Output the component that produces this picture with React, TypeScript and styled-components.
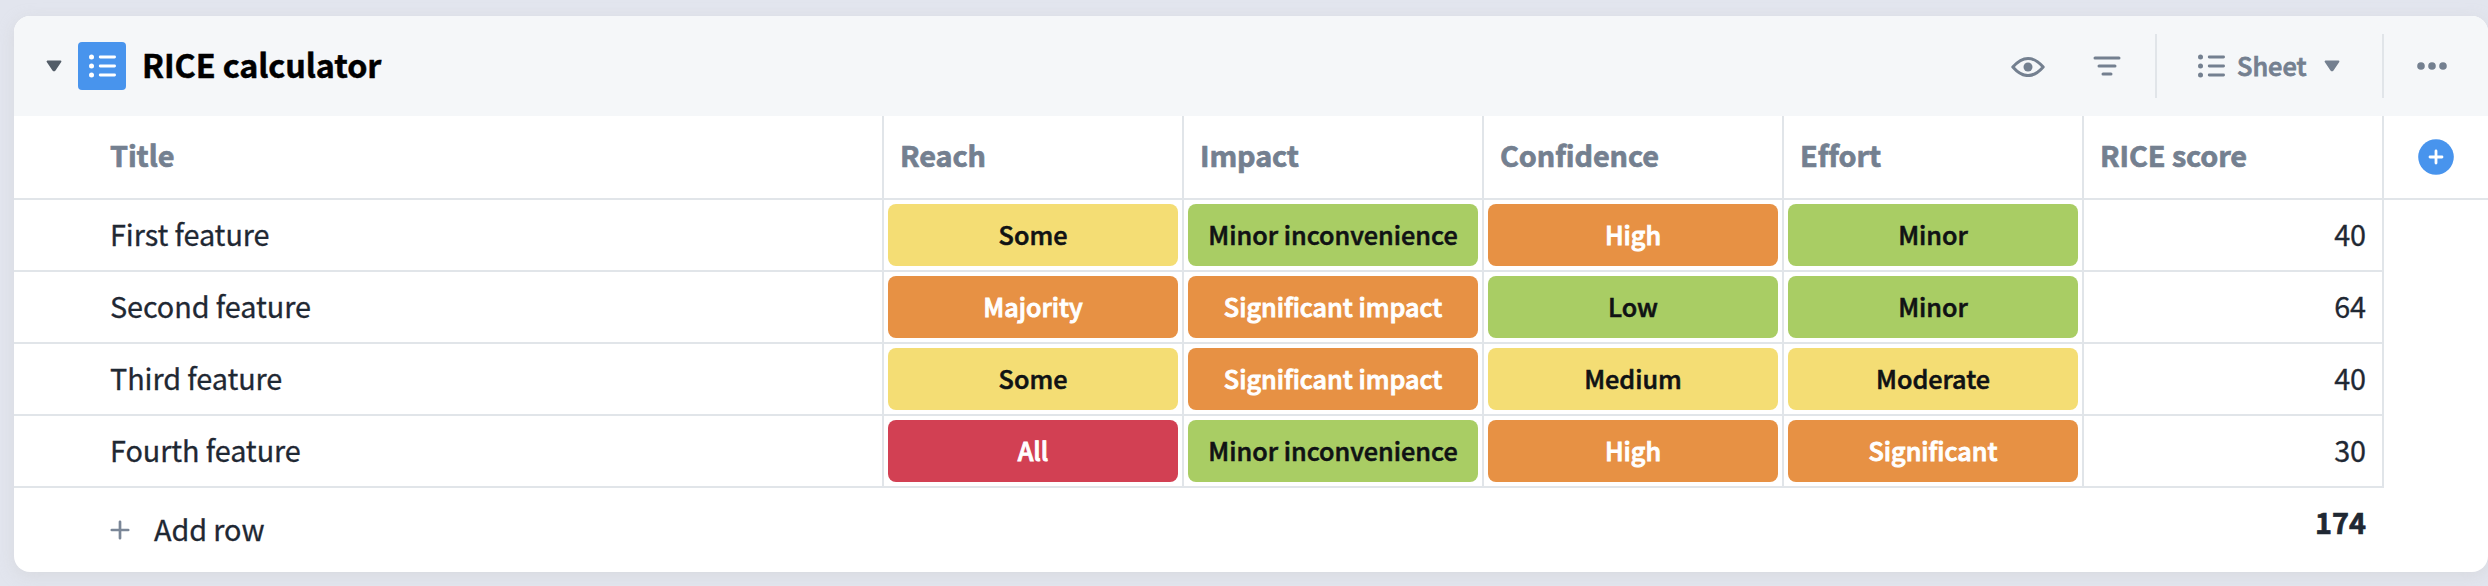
import React from 'react';
import styled, { createGlobalStyle } from 'styled-components';

const line = '#e1e5e9';
const slate = '#748090';
const blue = '#4894ed';

const tones = {
  yellow: { bg: '#f4dd74', fg: '#101214' },
  green: { bg: '#a9cd64', fg: '#101214' },
  orange: { bg: '#e79144', fg: '#ffffff' },
  red: { bg: '#d24053', fg: '#ffffff' },
};
type Tone = keyof typeof tones;

const GlobalStyle = createGlobalStyle`
  * { box-sizing: border-box; }
  body {
    margin: 0;
    background: #e2e5ee;
    font-family: "Noto Sans CJK SC", "Noto Sans", sans-serif;
    color: #1f2833;
    overflow: hidden;
  }
  svg { display: block; flex: none; }
`;

const Page = styled.main`
  height: 586px;
  padding: 16px 0 14px 14px;
`;

const Card = styled.section`
  height: 556px;
  background: #fff;
  border-radius: 16px;
  overflow: hidden;
  box-shadow: 0 4px 16px rgba(200, 200, 200, 0.4);
`;

const Header = styled.header`
  display: flex;
  align-items: center;
  height: 100px;
  padding-left: 32px;
  background: #f5f7f9;
`;

const AppBadge = styled.span`
  display: flex;
  align-items: center;
  width: 48px;
  height: 48px;
  margin-left: 16px;
  padding-left: 11px;
  border-radius: 4px;
  background: ${blue};
`;

const Heading = styled.h1`
  flex: 1;
  margin: 0 0 0 16px;
  padding-bottom: 4px;
  font-size: 32.3px;
  line-height: 48px;
  font-weight: 700;
  letter-spacing: -0.08px;
  color: #000;
  -webkit-text-stroke: 0.5px #000;
`;

const Tools = styled.div`
  display: flex;
  align-items: center;
  gap: 48px;
  padding-right: 34px;
`;

const ToolGroup = styled.div<{ $width: number; $left: number }>`
  display: flex;
  align-items: center;
  width: ${(p) => p.$width}px;
  height: 64px;
  padding-left: ${(p) => p.$left}px;
  border-left: 2px solid ${line};
`;

const ViewName = styled.span`
  width: 71px;
  margin: 0 16px 0 11px;
  padding-bottom: 2px;
  font-size: 25.3px;
  line-height: 36px;
  font-weight: 500;
  color: ${slate};
  -webkit-text-stroke: 0.8px ${slate};
`;

const Row = styled.div<{ $head?: boolean }>`
  display: grid;
  grid-template-columns: 870px repeat(5, 300px) 104px;
  height: ${(p) => (p.$head ? 84 : 72)}px;
`;

const Cell = styled.div<{ $first?: boolean; $end?: boolean }>`
  display: flex;
  align-items: center;
  justify-content: ${(p) => (p.$end ? 'flex-end' : 'flex-start')};
  padding: 0 ${(p) => (p.$end ? 16 : 0)}px 3px ${(p) => (p.$first ? 96 : 16)}px;
  border-right: 2px solid ${line};
  border-bottom: 2px solid ${line};
  font-size: 28.8px;
  line-height: 42px;
  letter-spacing: -0.08px;
  -webkit-text-stroke: 0.3px currentColor;
`;

const HeadCell = styled(Cell)`
  padding-bottom: 5px;
  font-weight: 700;
  color: ${slate};
  -webkit-text-stroke: 0.7px currentColor;
`;

const TagCell = styled(Cell)`
  padding: 4px;
  letter-spacing: 0;
`;

const Tag = styled.span<{ $tone: Tone }>`
  flex: 1;
  height: 62px;
  padding-bottom: 2px;
  border-radius: 8px;
  background: ${(p) => tones[p.$tone].bg};
  color: ${(p) => tones[p.$tone].fg};
  font-size: 25.2px;
  line-height: 60px;
  font-weight: 500;
  text-align: center;
  white-space: nowrap;
  -webkit-text-stroke: ${(p) => (tones[p.$tone].fg === '#ffffff' ? 0.9 : 0.6)}px currentColor;
`;

const AddColumn = styled.div`
  display: flex;
  align-items: center;
  padding-left: 34px;
  border-bottom: 2px solid ${line};
`;

const Footer = styled.footer`
  display: flex;
  justify-content: space-between;
  height: 84px;
  padding: 0 122px 0 96px;
  font-size: 28.8px;
  line-height: 42px;
`;

const AddRow = styled.div`
  display: flex;
  align-items: center;
  gap: 24px;
  height: 84px;
  letter-spacing: -0.08px;
  -webkit-text-stroke: 0.3px currentColor;

  span { padding-bottom: 3px; }
`;

const Total = styled.strong`
  padding-top: 13px;
  font-weight: 700;
  -webkit-text-stroke: 0.7px currentColor;
`;

const Caret = ({ color }: { color: string }) => (
  <svg width="16" height="12" viewBox="0 0 16 12">
    <path d="M1.5 1.4h13L8.6 10.2a.8.8 0 0 1-1.2 0Z" fill={color} stroke={color} strokeWidth="1.8" strokeLinejoin="round" />
  </svg>
);

const ListIcon = ({ color }: { color: string }) => (
  <svg width="28" height="24" viewBox="0 0 28 24">
    {[3, 12, 21].map((y) => (
      <g key={y}>
        <circle cx="2.5" cy={y} r="2.5" fill={color} />
        <path d={`M11.2 ${y}h14.4`} stroke={color} strokeWidth="2.8" strokeLinecap="round" />
      </g>
    ))}
  </svg>
);

const EyeIcon = () => (
  <svg width="34" height="22" viewBox="0 0 34 22">
    <path d="M1.8 12C6 7.2 11.5 3.4 17 3.4S28 7.2 32.2 12C28 16.8 22.5 20.6 17 20.6S6 16.8 1.8 12Z" fill="none" stroke={slate} strokeWidth="3" strokeLinejoin="round" />
    <circle cx="17" cy="12" r="4.5" fill={slate} />
  </svg>
);

const FilterIcon = () => (
  <svg width="28" height="20" viewBox="0 0 28 20">
    <path d="M2 2h24M6 10h16M10 18h8" stroke={slate} strokeWidth="3" strokeLinecap="round" />
  </svg>
);

const MoreIcon = () => (
  <svg width="30" height="8" viewBox="0 0 30 8">
    {[4, 15, 26].map((x) => <circle key={x} cx={x} cy="4" r="3.8" fill={slate} />)}
  </svg>
);

const records: { title: string; tags: [string, Tone][]; score: number }[] = [
  { title: 'First feature', tags: [['Some', 'yellow'], ['Minor inconvenience', 'green'], ['High', 'orange'], ['Minor', 'green']], score: 40 },
  { title: 'Second feature', tags: [['Majority', 'orange'], ['Significant impact', 'orange'], ['Low', 'green'], ['Minor', 'green']], score: 64 },
  { title: 'Third feature', tags: [['Some', 'yellow'], ['Significant impact', 'orange'], ['Medium', 'yellow'], ['Moderate', 'yellow']], score: 40 },
  { title: 'Fourth feature', tags: [['All', 'red'], ['Minor inconvenience', 'green'], ['High', 'orange'], ['Significant', 'orange']], score: 30 },
];

export default function App() {
  return (
    <Page>
      <GlobalStyle />
      <Card>
        <Header>
          <Caret color="#535d68" />
          <AppBadge><ListIcon color="#fff" /></AppBadge>
          <Heading>RICE calculator</Heading>
          <Tools>
            <EyeIcon />
            <FilterIcon />
          </Tools>
          <ToolGroup $width={227} $left={41}>
            <ListIcon color={slate} />
            <ViewName>Sheet</ViewName>
            <Caret color={slate} />
          </ToolGroup>
          <ToolGroup $width={106} $left={33}>
            <MoreIcon />
          </ToolGroup>
        </Header>
        <Row $head>
          <HeadCell $first>Title</HeadCell>
          {['Reach', 'Impact', 'Confidence', 'Effort', 'RICE score'].map((name) => (
            <HeadCell key={name}>{name}</HeadCell>
          ))}
          <AddColumn>
            <svg width="36" height="36" viewBox="0 0 36 36">
              <circle cx="18" cy="18" r="17.8" fill={blue} />
              <path d="M18 12v12M12 18h12" stroke="#fff" strokeWidth="2.8" strokeLinecap="round" />
            </svg>
          </AddColumn>
        </Row>
        {records.map((r) => (
          <Row key={r.title}>
            <Cell $first>{r.title}</Cell>
            {r.tags.map(([label, tone], i) => (
              <TagCell key={i}><Tag $tone={tone}>{label}</Tag></TagCell>
            ))}
            <Cell $end>{r.score}</Cell>
          </Row>
        ))}
        <Footer>
          <AddRow>
            <svg width="20" height="20" viewBox="0 0 20 20">
              <path d="M10 1.8v16.4M1.8 10h16.4" stroke="#7a8697" strokeWidth="2.7" strokeLinecap="round" />
            </svg>
            <span>Add row</span>
          </AddRow>
          <Total>174</Total>
        </Footer>
      </Card>
    </Page>
  );
}
